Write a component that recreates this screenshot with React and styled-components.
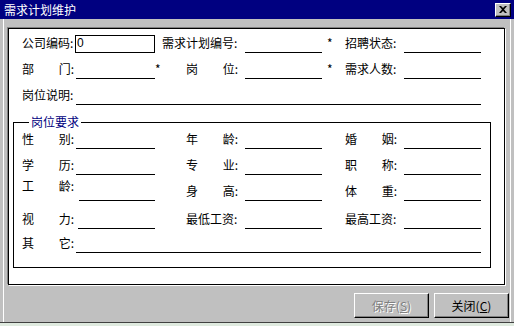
import React from 'react'
import styled, { createGlobalStyle } from 'styled-components'

const GlobalStyle = createGlobalStyle`
  html, body {
    margin: 0;
    padding: 0;
    background: #dfeadf;
  }
  body {
    font-family: "Noto Sans CJK SC", "Liberation Sans", sans-serif;
    font-size: 12px;
    color: #000;
  }
`;

const COLS = '54px 79px 7px 83px 77px 23px 59px 77px';

const Window = styled.div`
  width: 514px;
  height: 322px;
  background: #c0c0c0;
  border-bottom: 1px solid #404040;
  display: flex;
  flex-direction: column;
`;

const TitleBar = styled.div`
  height: 19px;
  background: #000080;
  color: #fff;
  display: flex;
  align-items: center;
  justify-content: space-between;
  padding: 0 3px 0 4px;
  font-size: 12px;
  line-height: 14px;
`;

const CloseBox = styled.div`
  width: 16px;
  height: 14px;
  box-sizing: border-box;
  background: #c0c0c0;
  color: #000;
  border-top: 1px solid #fff;
  border-left: 1px solid #fff;
  border-right: 1px solid #000;
  border-bottom: 1px solid #000;
  box-shadow: inset -1px -1px 0 #808080;
  display: flex;
  align-items: center;
  justify-content: center;
`;

const Client = styled.div`
  flex: 1;
  margin: 0 3px;
  border-left: 1px solid #fff;
  border-right: 1px solid #fff;
  padding: 9px 1px 0 4px;
  display: flex;
  flex-direction: column;
`;

const Panel = styled.div`
  width: 497px;
  height: 257px;
  box-sizing: border-box;
  background: #fff;
  border: 1px solid #000;
  box-shadow: -1px -1px 0 #808080, 1px 1px 0 #fff;
  padding: 6px 13px 0 4px;
`;

const TopFields = styled.div`
  padding-left: 9px;
`;

const Row = styled.div`
  display: grid;
  grid-template-columns: ${COLS};
  height: ${p => p.$h}px;
  align-items: end;
`;

const Label = styled.span`
  display: flex;
  justify-content: ${p => (p.$spread ? 'space-between' : 'flex-start')};
  width: ${p => (p.$spread ? '52px' : 'auto')};
  margin-left: ${p => p.$indent || 0}px;
  padding-bottom: ${p => (p.$lift ? 8 : 3)}px;
  line-height: 14px;
  white-space: nowrap;
`;

const Star = styled.span`
  padding-left: ${p => p.$pad || 0}px;
  padding-bottom: 3px;
  line-height: 14px;
`;

const Field = styled.div`
  height: 1px;
  border-bottom: 1px solid #000;
  grid-column: ${p => (p.$wide ? '2 / -1' : 'auto')};
  margin-left: ${p => p.$shift || 0}px;
`;

const TextBox = styled.div`
  width: 80px;
  height: 18px;
  box-sizing: border-box;
  margin-left: -1px;
  border: 1px solid #000;
  padding-left: 1px;
  line-height: 14px;
  font-family: "Liberation Sans", sans-serif;
`;

const Group = styled.fieldset`
  margin: 10px 0 0 0;
  width: 478px;
  box-sizing: border-box;
  border: 1px solid #000;
  padding: 0 0 14px 8px;
  min-width: 0;
`;

const Legend = styled.legend`
  margin-left: 7px;
  padding: 0 2px;
  color: #000080;
  line-height: 14px;
`;

const ButtonBar = styled.div`
  display: flex;
  justify-content: flex-end;
  gap: 5px;
  margin-top: 8px;
`;

const Button = styled.button`
  width: 75px;
  height: 25px;
  box-sizing: border-box;
  background: #c0c0c0;
  font-family: inherit;
  font-size: 12px;
  padding: 0;
  border-top: 1px solid #fff;
  border-left: 1px solid #fff;
  border-right: 1px solid #000;
  border-bottom: 1px solid #000;
  box-shadow: inset -1px -1px 0 #808080;
  color: ${p => (p.disabled ? '#808080' : '#000')};
  text-shadow: ${p => (p.disabled ? '1px 1px 0 #fff' : 'none')};
`;

const Spread = ({ a, b, indent, lift }) => (
  <Label $spread $indent={indent} $lift={lift}>
    <span>{a}</span>
    <span>{b}:</span>
  </Label>
);

const App = () => {
  return (
    <>
      <GlobalStyle />
      <Window>
        <TitleBar>
          <span>需求计划维护</span>
          <CloseBox>
            <svg width="8" height="7" viewBox="0 0 8 7">
              <path d="M0 0h2l2 2 2-2h2L5 3.5 8 7H6L4 5 2 7H0l3-3.5z" fill="#000" />
            </svg>
          </CloseBox>
        </TitleBar>
        <Client>
          <Panel>
            <TopFields>
              <Row $h={18}>
                <Label>公司编码:</Label>
                <TextBox>0</TextBox>
                <span />
                <Label>需求计划编号:</Label>
                <Field />
                <Star $pad={5}>*</Star>
                <Label>招聘状态:</Label>
                <Field />
              </Row>
              <Row $h={26}>
                <Spread a="部" b="门" />
                <Field />
                <Star>*</Star>
                <Spread a="岗" b="位" indent={24} />
                <Field />
                <Star $pad={5}>*</Star>
                <Label>需求人数:</Label>
                <Field />
              </Row>
              <Row $h={26}>
                <Label>岗位说明:</Label>
                <Field $wide />
              </Row>
            </TopFields>
            <Group>
              <Legend>岗位要求</Legend>
              <Row $h={20}>
                <Spread a="性" b="别" />
                <Field />
                <span />
                <Spread a="年" b="龄" indent={24} />
                <Field />
                <span />
                <Spread a="婚" b="姻" />
                <Field />
              </Row>
              <Row $h={26}>
                <Spread a="学" b="历" />
                <Field />
                <span />
                <Spread a="专" b="业" indent={24} />
                <Field />
                <span />
                <Spread a="职" b="称" />
                <Field />
              </Row>
              <Row $h={26}>
                <Spread a="工" b="龄" lift />
                <Field $shift={3} />
                <span />
                <Spread a="身" b="高" indent={24} />
                <Field />
                <span />
                <Spread a="体" b="重" />
                <Field />
              </Row>
              <Row $h={28}>
                <Spread a="视" b="力" />
                <Field $shift={2} />
                <span />
                <Label $indent={24}>最低工资:</Label>
                <Field />
                <span />
                <Label>最高工资:</Label>
                <Field />
              </Row>
              <Row $h={24}>
                <Spread a="其" b="它" />
                <Field $wide />
              </Row>
            </Group>
          </Panel>
          <ButtonBar>
            <Button disabled>保存(<u>S</u>)</Button>
            <Button>关闭(<u>C</u>)</Button>
          </ButtonBar>
        </Client>
      </Window>
    </>
  )
}

export default App
